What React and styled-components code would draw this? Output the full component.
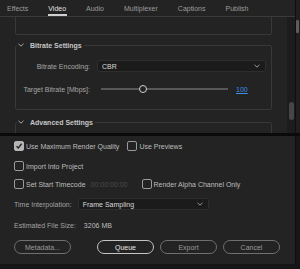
import React from "react"
import styled, { createGlobalStyle } from "styled-components"

const GlobalStyle = createGlobalStyle`
  html, body {
    margin: 0;
    padding: 0;
    background: #161616;
  }
  * {
    box-sizing: border-box;
  }
`

const Frame = styled.div`
  width: 300px;
  height: 269px;
  display: flex;
  flex-direction: column;
  overflow: hidden;
  background: #161616;
  font-family: "Liberation Sans", Arial, sans-serif;
  font-size: 7px;
  color: #b8b8b8;
`

const Top = styled.div`
  display: flex;
  height: 133px;
  flex-shrink: 0;
`

const Main = styled.div`
  width: 295px;
  display: flex;
  flex-direction: column;
  background: #232323;
`

const TabBar = styled.div`
  height: 17px;
  flex-shrink: 0;
  display: flex;
  align-items: stretch;
  gap: 19px;
  padding-left: 7px;
  border-bottom: 1px solid #3a3a3a;
`

const Tab = styled.div`
  display: flex;
  align-items: center;
  padding-top: 2px;
  padding-right: 1px;
  border-bottom: 2px solid ${p => (p.$active ? "#cfcfcf" : "transparent")};
  color: ${p => (p.$active ? "#e2e2e2" : "#9c9c9c")};
  white-space: nowrap;
`

const Body = styled.div`
  flex: 1;
  display: flex;
  min-height: 0;
`

const Scroll = styled.div`
  flex: 1;
  overflow: hidden;
  display: flex;
  flex-direction: column;
  padding: 0 15px;
`

const ClippedPanel = styled.div`
  flex-shrink: 0;
  margin-top: -10px;
  height: 28px;
  border: 1px solid #383838;
  border-radius: 2px;
`

const Group = styled.fieldset`
  flex-shrink: 0;
  margin: ${p => p.$mt}px 0 0;
  padding: 10px 5px 14px 4px;
  min-width: 0;
  border: 1px solid #383838;
  border-radius: 2px;
`

const Legend = styled.legend`
  display: flex;
  align-items: center;
  gap: 6px;
  height: 10px;
  margin-left: -3px;
  padding: 0 2px 0 1px;
  color: #c6c6c6;
  font-weight: bold;
`

const FieldRow = styled.div`
  display: grid;
  grid-template-columns: 70px 1fr;
  column-gap: 7px;
  align-items: center;
  height: 12px;
  margin-top: ${p => p.$mt || 0}px;
`

const FieldLabel = styled.span`
  text-align: right;
  white-space: nowrap;
  color: #a6a6a6;
`

const Select = styled.div`
  width: ${p => (p.$width ? `${p.$width}px` : "auto")};
  height: 12px;
  margin-left: ${p => p.$ml || 0}px;
  display: flex;
  align-items: center;
  justify-content: space-between;
  padding: 0 5px 0 4px;
  background: #1b1b1b;
  border: 1px solid #2e2e2e;
  border-radius: 2px;
  color: #d8d8d8;
`

const Slider = styled.div`
  display: flex;
  align-items: center;
  height: 12px;
`

const Track = styled.div`
  position: relative;
  width: 127px;
  height: 2px;
  margin-left: 4px;
  background: #575757;
`

const Knob = styled.div`
  position: absolute;
  top: 50%;
  width: 8px;
  height: 8px;
  margin: -4px 0 0 -4px;
  border: 1.5px solid #d2d2d2;
  border-radius: 50%;
  background: #232323;
`

const ValueLink = styled.span`
  margin-left: 8px;
  color: #3d8fe8;
  text-decoration: underline;
`

const InnerTrack = styled.div`
  width: 8px;
  background: #1c1c1c;
`

const InnerThumb = styled.div`
  width: 5px;
  height: 18px;
  margin: 85px 0 0 2px;
  border-radius: 3px;
  background: #464646;
`

const Rail = styled.div`
  flex: 1;
  border-left: 1px solid #0f0f0f;
  background: ${p => p.$dark ? "#171717" : "#1f1f1f"};
`

const RailThumb = styled.div`
  width: 3px;
  height: 13px;
  margin: 20px 0 0 0;
  border-radius: 1px;
  background: #5c5c5c;
`

const Separator = styled.div`
  height: 3px;
  flex-shrink: 0;
  background: #0a0a0a;
`

const Bottom = styled.div`
  display: flex;
  height: 128px;
  flex-shrink: 0;
`

const BottomPanel = styled.div`
  width: 295px;
  display: flex;
  flex-direction: column;
  padding: 5px 15px 0 14px;
  background: #232323;
`

const Row = styled.div`
  display: flex;
  align-items: center;
  height: ${p => p.$h || 10}px;
  margin-top: ${p => p.$mt || 0}px;
  white-space: nowrap;
`

const Box = styled.span`
  width: 10px;
  height: 10px;
  flex-shrink: 0;
  margin-left: ${p => p.$ml || 0}px;
  display: flex;
  align-items: center;
  justify-content: center;
  border: 1px solid ${p => (p.$checked ? "#b6b6b6" : "#9a9a9a")};
  border-radius: 2px;
  background: ${p => (p.$checked ? "#b6b6b6" : "transparent")};
`

const CheckText = styled.span`
  margin-left: 2px;
  color: #bdbdbd;
`

const Muted = styled.span`
  margin-left: ${p => p.$ml || 0}px;
  color: ${p => p.$color || "#a2a2a2"};
`

const ButtonRow = styled.div`
  display: flex;
  justify-content: space-between;
  margin-top: 10px;
`

const ButtonGroup = styled.div`
  display: flex;
  gap: 6px;
`

const Button = styled.button`
  width: 57px;
  height: 14px;
  padding: 0;
  border-radius: 7px;
  background: transparent;
  font-family: inherit;
  font-size: 7px;
  border: 1px solid ${p => (p.$primary ? "#c4c4c4" : "#6f6f6f")};
  color: ${p => (p.$primary ? "#e6e6e6" : "#9a9a9a")};
`

const Chevron = ({ color = "#9a9a9a" }) => (
  <svg width="6" height="4" viewBox="0 0 6 4">
    <polyline points="0.5,0.8 3,3.2 5.5,0.8" fill="none" stroke={color} strokeWidth="1" />
  </svg>
)

const Checkbox = ({ checked, ml, children }) => (
  <>
    <Box $checked={checked} $ml={ml}>
      {checked && (
        <svg width="8" height="8" viewBox="0 0 8 8">
          <polyline points="1.5,4.2 3.3,6 6.6,1.8" fill="none" stroke="#262626" strokeWidth="1.4" />
        </svg>
      )}
    </Box>
    <CheckText>{children}</CheckText>
  </>
)

const tabs = ["Effects", "Video", "Audio", "Multiplexer", "Captions", "Publish"]

const bitrate = { min: 0, max: 300, value: 100 }

export default function App() {
  const pct = ((bitrate.value - bitrate.min) / (bitrate.max - bitrate.min)) * 100

  return (
    <Frame>
      <GlobalStyle />
      <Top>
        <Main>
          <TabBar>
            {tabs.map(t => (
              <Tab key={t} $active={t === "Video"}>
                {t}
              </Tab>
            ))}
          </TabBar>
          <Body>
            <Scroll>
              <ClippedPanel />
              <Group $mt={5}>
                <Legend>
                  <Chevron color="#a8a8a8" />
                  Bitrate Settings
                </Legend>
                <FieldRow>
                  <FieldLabel>Bitrate Encoding:</FieldLabel>
                  <Select>
                    CBR
                    <Chevron />
                  </Select>
                </FieldRow>
                <FieldRow $mt={11}>
                  <FieldLabel>Target Bitrate [Mbps]:</FieldLabel>
                  <Slider>
                    <Track>
                      <Knob style={{ left: `${pct}%` }} />
                    </Track>
                    <ValueLink>{bitrate.value}</ValueLink>
                  </Slider>
                </FieldRow>
              </Group>
              <Group $mt={7}>
                <Legend>
                  <Chevron color="#a8a8a8" />
                  Advanced Settings
                </Legend>
                <FieldRow />
              </Group>
            </Scroll>
            <InnerTrack>
              <InnerThumb />
            </InnerTrack>
          </Body>
        </Main>
        <Rail>
          <RailThumb />
        </Rail>
      </Top>
      <Separator />
      <Bottom>
        <BottomPanel>
          <Row>
            <Checkbox checked>Use Maximum Render Quality</Checkbox>
            <Checkbox ml={8}>Use Previews</Checkbox>
          </Row>
          <Row $mt={10}>
            <Checkbox>Import Into Project</Checkbox>
          </Row>
          <Row $mt={8}>
            <Checkbox>Set Start Timecode</Checkbox>
            <Muted $ml={5} $color="#4c4c4c">00:00:00:00</Muted>
            <Checkbox ml={14}>Render Alpha Channel Only</Checkbox>
          </Row>
          <Row $h={12} $mt={9}>
            <Muted>Time Interpolation:</Muted>
            <Select $width={131} $ml={6}>
              Frame Sampling
              <Chevron />
            </Select>
          </Row>
          <Row $mt={10}>
            <Muted>Estimated File Size:</Muted>
            <Muted $ml={8} $color="#bcbcbc">3206 MB</Muted>
          </Row>
          <ButtonRow>
            <Button>Metadata...</Button>
            <ButtonGroup>
              <Button $primary>Queue</Button>
              <Button>Export</Button>
              <Button>Cancel</Button>
            </ButtonGroup>
          </ButtonRow>
        </BottomPanel>
        <Rail $dark />
      </Bottom>
    </Frame>
  )
}
